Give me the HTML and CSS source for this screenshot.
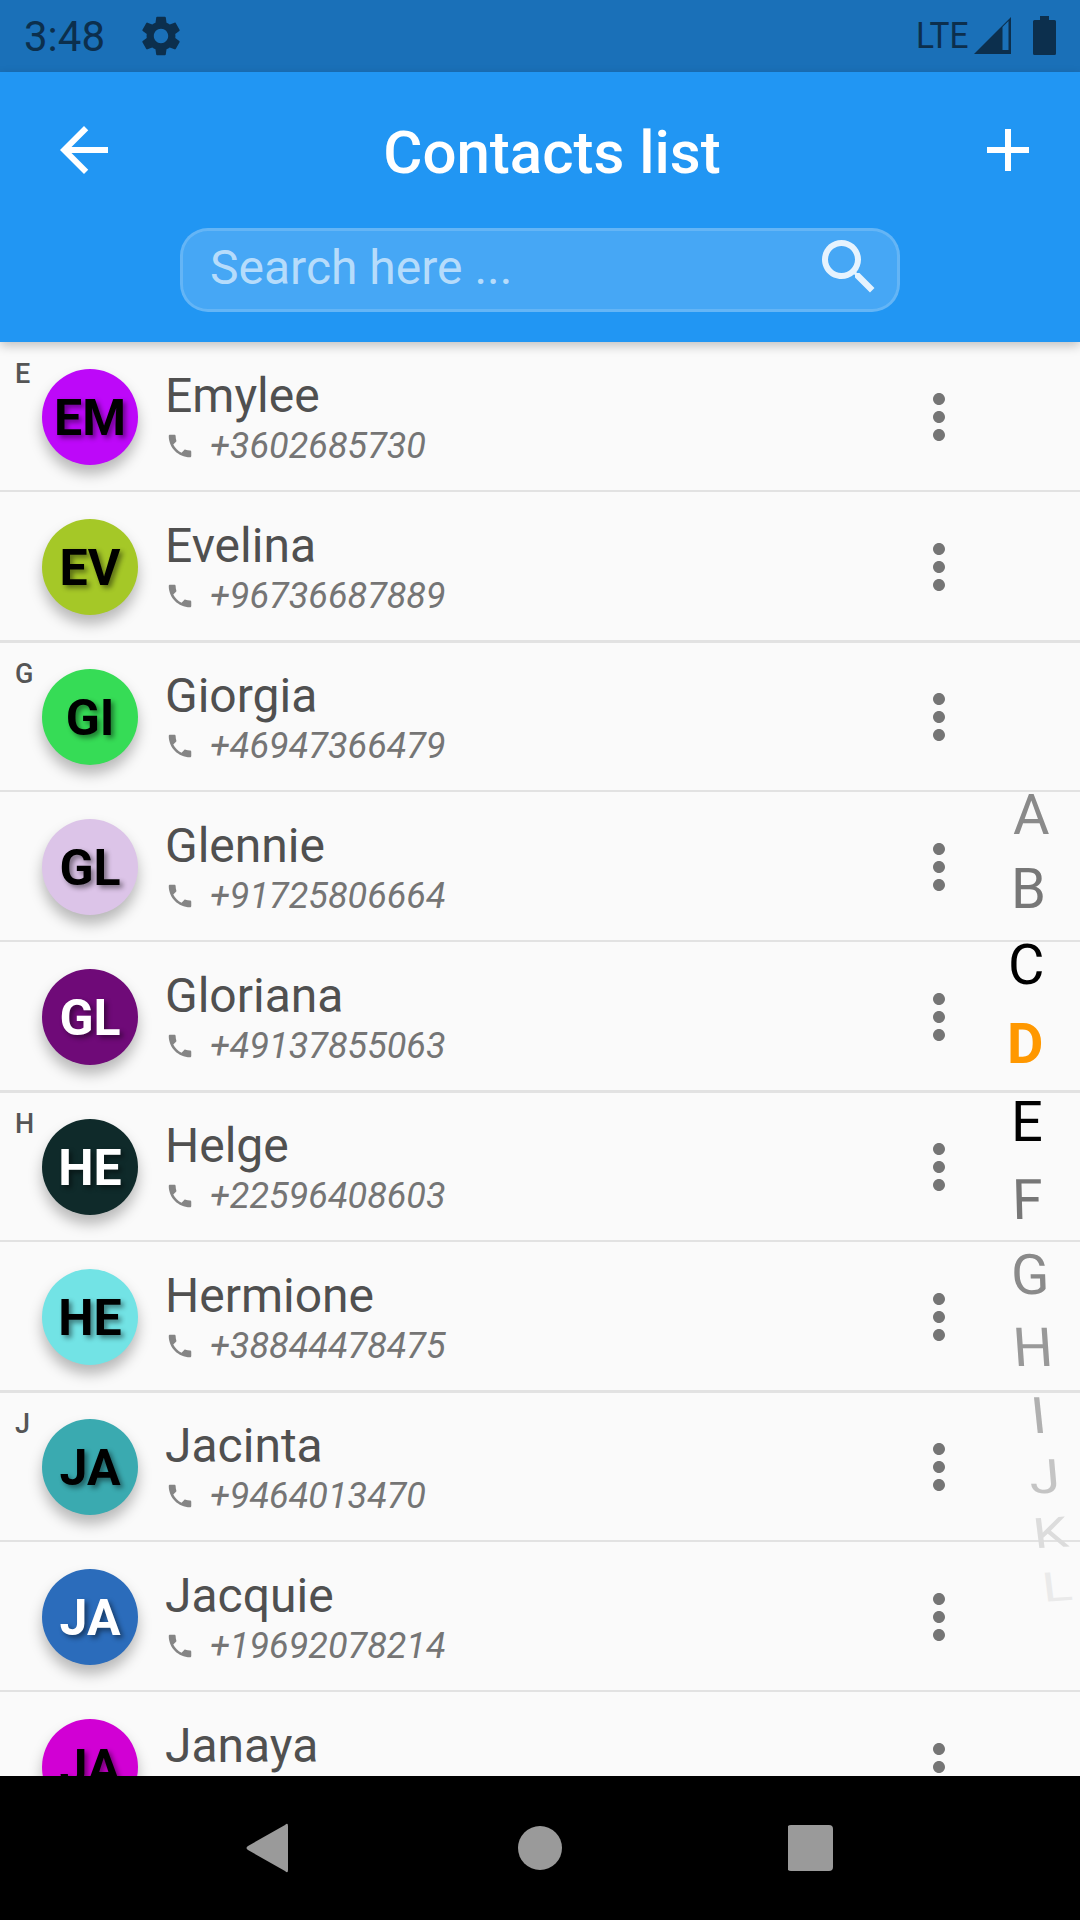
FILE: index.html
```html
<!DOCTYPE html>
<html lang="en">
<head>
<meta charset="utf-8">
<title>Contacts list</title>
<link rel="stylesheet" href="styles.css">
</head>
<body>
<div class="phone">
  <svg width="0" height="0" class="defs">
    <defs>
      <symbol id="i-phone" viewBox="0 0 24 24"><path d="M6.62 10.79c1.44 2.83 3.76 5.14 6.59 6.59l2.2-2.2c.27-.27.67-.36 1.02-.24 1.12.37 2.33.57 3.57.57.55 0 1 .45 1 1V20c0 .55-.45 1-1 1-9.39 0-17-7.61-17-17 0-.55.45-1 1-1h3.5c.55 0 1 .45 1 1 0 1.25.2 2.45.57 3.57.11.35.03.74-.25 1.02l-2.2 2.2z"/></symbol>
      <symbol id="i-more" viewBox="0 0 24 24"><path d="M12 8c1.1 0 2-.9 2-2s-.9-2-2-2-2 .9-2 2 .9 2 2 2zm0 2c-1.1 0-2 .9-2 2s.9 2 2 2 2-.9 2-2-.9-2-2-2zm0 6c-1.1 0-2 .9-2 2s.9 2 2 2 2-.9 2-2-.9-2-2-2z"/></symbol>
    </defs>
  </svg>

  <header class="status">
    <div class="status-left">
      <span class="time">3:48</span>
      <svg class="gear" viewBox="0 0 24 24"><path d="M19.14 12.94c.04-.3.06-.61.06-.94 0-.32-.02-.64-.07-.94l2.03-1.58c.18-.14.23-.41.12-.61l-1.92-3.32c-.12-.22-.37-.29-.59-.22l-2.39.96c-.5-.38-1.03-.7-1.62-.94l-.36-2.54c-.04-.24-.24-.41-.48-.41h-3.84c-.24 0-.43.17-.47.41l-.36 2.54c-.59.24-1.13.57-1.62.94l-2.39-.96c-.22-.08-.47 0-.59.22L2.74 8.87c-.12.21-.08.47.12.61l2.03 1.58c-.05.3-.09.63-.09.94s.02.64.07.94l-2.03 1.58c-.18.14-.23.41-.12.61l1.92 3.32c.12.22.37.29.59.22l2.39-.96c.5.38 1.03.7 1.62.94l.36 2.54c.05.24.24.41.48.41h3.84c.24 0 .44-.17.47-.41l.36-2.54c.59-.24 1.13-.56 1.62-.94l2.39.96c.22.08.47 0 .59-.22l1.92-3.32c.12-.22.07-.47-.12-.61l-2.01-1.58zM12 15.6c-1.98 0-3.6-1.62-3.6-3.6s1.62-3.6 3.6-3.6 3.6 1.62 3.6 3.6-1.62 3.6-3.6 3.6z"/></svg>
    </div>
    <div class="status-right">
      <span class="lte">LTE</span>
      <svg class="signal" viewBox="0 0 37 37"><path d="M0 37 26 11v26z"/><path fill-rule="evenodd" d="M26 11 37 0v37H26zM28.500 10V33H34.500V4z"/></svg>
      <svg class="battery" viewBox="0 0 23 39"><path d="M7 0h9v4h5.500q1.500 0 1.500 1.500v32q0 1.500-1.500 1.500h-20q-1.500 0-1.500-1.500v-32q0-1.500 1.500-1.500H7z"/></svg>
    </div>
  </header>

  <section class="appbar">
    <div class="appbar-top">
      <svg class="bar-icon" viewBox="0 0 24 24"><path d="M20 11H7.830l5.590-5.590L12 4l-8 8 8 8 1.410-1.410L7.830 13H20v-2z"/></svg>
      <h1 class="title">Contacts list</h1>
      <svg class="bar-icon" viewBox="0 0 24 24"><path d="M19 13h-6v6h-2v-6H5v-2h6V5h2v6h6v2z"/></svg>
    </div>
    <div class="search">
      <span class="search-text">Search here ...</span>
      <svg class="search-icon" viewBox="0 0 24 24"><path d="M15.500 14h-.79l-.28-.27C15.410 12.590 16 11.110 16 9.500 16 5.910 13.090 3 9.500 3S3 5.910 3 9.500 5.910 16 9.500 16c1.610 0 3.090-.59 4.230-1.570l.27.280v.79l5 4.990L20.490 19l-4.990-5zm-6 0C7.010 14 5 11.990 5 9.500S7.010 5 9.500 5 14 7.010 14 9.500 11.990 14 9.500 14z"/></svg>
    </div>
  </section>

  <main class="list">
    <article class="row">
      <span class="section-letter">E</span>
      <div class="avatar c-em">EM</div>
      <div class="info"><div class="name">Emylee</div><div class="tel"><svg class="tel-icon"><use href="#i-phone"/></svg><span class="num">+3602685730</span></div></div>
      <svg class="more"><use href="#i-more"/></svg>
    </article>
    <article class="row end">
      <div class="avatar c-ev">EV</div>
      <div class="info"><div class="name">Evelina</div><div class="tel"><svg class="tel-icon"><use href="#i-phone"/></svg><span class="num">+96736687889</span></div></div>
      <svg class="more"><use href="#i-more"/></svg>
    </article>
    <article class="row">
      <span class="section-letter">G</span>
      <div class="avatar c-gi">GI</div>
      <div class="info"><div class="name">Giorgia</div><div class="tel"><svg class="tel-icon"><use href="#i-phone"/></svg><span class="num">+46947366479</span></div></div>
      <svg class="more"><use href="#i-more"/></svg>
    </article>
    <article class="row">
      <div class="avatar c-gl1">GL</div>
      <div class="info"><div class="name">Glennie</div><div class="tel"><svg class="tel-icon"><use href="#i-phone"/></svg><span class="num">+91725806664</span></div></div>
      <svg class="more"><use href="#i-more"/></svg>
    </article>
    <article class="row end">
      <div class="avatar c-gl2 light">GL</div>
      <div class="info"><div class="name">Gloriana</div><div class="tel"><svg class="tel-icon"><use href="#i-phone"/></svg><span class="num">+49137855063</span></div></div>
      <svg class="more"><use href="#i-more"/></svg>
    </article>
    <article class="row">
      <span class="section-letter">H</span>
      <div class="avatar c-he1 light">HE</div>
      <div class="info"><div class="name">Helge</div><div class="tel"><svg class="tel-icon"><use href="#i-phone"/></svg><span class="num">+22596408603</span></div></div>
      <svg class="more"><use href="#i-more"/></svg>
    </article>
    <article class="row end">
      <div class="avatar c-he2">HE</div>
      <div class="info"><div class="name">Hermione</div><div class="tel"><svg class="tel-icon"><use href="#i-phone"/></svg><span class="num">+38844478475</span></div></div>
      <svg class="more"><use href="#i-more"/></svg>
    </article>
    <article class="row">
      <span class="section-letter">J</span>
      <div class="avatar c-ja1">JA</div>
      <div class="info"><div class="name">Jacinta</div><div class="tel"><svg class="tel-icon"><use href="#i-phone"/></svg><span class="num">+9464013470</span></div></div>
      <svg class="more"><use href="#i-more"/></svg>
    </article>
    <article class="row">
      <div class="avatar c-ja2 light">JA</div>
      <div class="info"><div class="name">Jacquie</div><div class="tel"><svg class="tel-icon"><use href="#i-phone"/></svg><span class="num">+19692078214</span></div></div>
      <svg class="more"><use href="#i-more"/></svg>
    </article>
    <article class="row">
      <div class="avatar c-ja3">JA</div>
      <div class="info"><div class="name">Janaya</div><div class="tel"></div></div>
      <svg class="more"><use href="#i-more"/></svg>
    </article>
  </main>

  <nav class="alpha">
    <span class="l l-a">A</span>
    <span class="l l-b">B</span>
    <span class="l l-c">C</span>
    <span class="l l-d">D</span>
    <span class="l l-e">E</span>
    <span class="l l-f">F</span>
    <span class="l l-g">G</span>
    <span class="l l-h">H</span>
    <span class="l l-i">I</span>
    <span class="l l-j">J</span>
    <span class="l l-k">K</span>
    <span class="l l-l">L</span>
  </nav>

  <footer class="navbar">
    <svg class="nav-icon" viewBox="0 0 46 50"><path d="M39 2q3-3 3 1v44q0 4-3 1L2 27q-3-2 0-4z"/></svg>
    <svg class="nav-icon" viewBox="0 0 46 50"><circle cx="23" cy="25" r="22"/></svg>
    <svg class="nav-icon" viewBox="0 0 46 50"><rect x="-1" y="2" width="46" height="46" rx="4"/></svg>
  </footer>
</div>
</body>
</html>
```
FILE: styles.css
```css
* { box-sizing: border-box; }
html, body { margin: 0; padding: 0; }
body { font-family: Roboto, "Liberation Sans", sans-serif; background: #fafafa; }

.defs { position: absolute; }

.phone {
  position: relative;
  width: 1080px;
  height: 1920px;
  display: flex;
  flex-direction: column;
  overflow: hidden;
  background: #fafafa;
}

/* Status bar */
.status {
  height: 72px;
  flex: none;
  background: #1a70b8;
  color: #0c2f4d;
  display: flex;
  align-items: center;
  justify-content: space-between;
  padding: 0 24px 0 24px;
}
.status-left, .status-right { display: flex; align-items: center; }
.time { font-size: 42px; line-height: 72px; margin-top: 2px; }
.gear { width: 48px; height: 48px; margin-left: 32px; fill: #0c2f4d; }
.lte { font-size: 36px; line-height: 72px; display: inline-block; transform: scaleX(.93); transform-origin: right center; margin-right: 6px; }
.signal { width: 37px; height: 37px; fill: #0c2f4d; margin-right: 22px; margin-top: -1px; }
.battery { width: 23px; height: 39px; fill: #0c2f4d; margin-top: -1px; }

/* App bar */
.appbar {
  position: relative;
  z-index: 2;
  height: 270px;
  flex: none;
  background: #2196f3;
  box-shadow: 0 4px 10px rgba(0,0,0,.22);
  display: flex;
  flex-direction: column;
}
.appbar-top {
  height: 156px;
  padding: 0 36px 0 48px;
  display: flex;
  align-items: center;
  justify-content: space-between;
  flex: none;
}
.bar-icon { width: 72px; height: 72px; fill: #fff; flex: none; }
.title {
  margin: 6px 0 0 12px;
  font-size: 60px;
  font-weight: 500;
  color: #fff;
  line-height: 72px;
}
.search {
  width: 720px;
  height: 84px;
  margin-left: 180px;
  border: 3px solid rgba(255,255,255,.3);
  border-radius: 28px;
  background: rgba(255,255,255,.17);
  background-clip: padding-box;
  display: flex;
  align-items: center;
  justify-content: space-between;
  padding: 0 12px 0 27px;
}
.search-text { font-size: 48px; color: #b6dcfb; line-height: 72px; margin-top: -4px; }
.search-icon { width: 72px; height: 72px; fill: #e6f3fe; margin-top: -6px; }

/* List */
.list { flex: 1; overflow: hidden; min-height: 0; }
.row {
  position: relative;
  height: 150px;
  display: flex;
  align-items: center;
  padding: 2px 105px 0 42px;
  border-bottom: 2px solid #e2e2e2;
}
.row.end { height: 151px; margin-bottom: -1px; border-bottom: 3px solid #e2e2e2; }
.section-letter {
  position: absolute;
  left: 15px;
  top: 15px;
  font-size: 27px;
  font-weight: 500;
  line-height: 34px;
  color: #555;
}
.avatar {
  width: 96px;
  height: 96px;
  flex: none;
  border-radius: 50%;
  display: flex;
  align-items: center;
  justify-content: center;
  padding-top: 1px;
  font-size: 50px;
  font-weight: 700;
  color: #000;
  text-shadow: 3px 3px 5px rgba(0,0,0,.45);
  box-shadow: 0 9px 14px rgba(0,0,0,.27);
}
.avatar.light { color: #fff; }
.c-em { background: #bd08f9; }
.c-ev { background: #a5c827; }
.c-gi { background: #36dc56; }
.c-gl1 { background: #dcc4e8; }
.c-gl2 { background: #6f0a78; }
.c-he1 { background: #0f2a2a; }
.c-he2 { background: #72e3e5; }
.c-ja1 { background: #3aaab0; }
.c-ja2 { background: #2b6cbb; }
.c-ja3 { background: #d100d4; }

.info { margin: 2px 0 0 27px; flex: 1; min-width: 0; }
.name { font-size: 48px; line-height: 52px; color: #505050; }
.tel { display: flex; align-items: center; height: 42px; margin-top: 3px; }
.tel-icon { width: 30px; height: 30px; fill: #858585; flex: none; }
.num { font-size: 36px; font-style: italic; color: #757575; margin-left: 15px; line-height: 42px; }
.more { width: 72px; height: 72px; fill: #757575; flex: none; }

/* Alphabet wheel */
.alpha {
  position: absolute;
  inset: 0;
  z-index: 1;
  pointer-events: none;
}
.l { position: absolute; font-size: 56px; line-height: 1; color: #757575; }
.l-a { left: 1013px; top: 787px; color: #8a8a8a; }
.l-b { left: 1011px; top: 861px; color: #777; }
.l-c { left: 1008px; top: 937px; color: #000; }
.l-d { left: 1007px; top: 1016px; color: #ff9800; font-weight: 700; }
.l-e { left: 1011px; top: 1094px; color: #000; }
.l-f { left: 1012px; top: 1172px; color: #777; transform: skewX(1.5deg); }
.l-g { left: 1011px; top: 1247px; color: #8a8a8a; transform: skewX(2deg); }
.l-h { left: 1013px; top: 1320px; color: #999; transform: skewX(4deg) scaleY(.96); }
.l-i { left: 1031px; top: 1388px; color: #b0b0b0; transform: skewX(6deg) scaleY(.9); }
.l-j { left: 1029px; top: 1449px; color: #c4c4c4; transform: skewX(5deg) scaleY(.85); }
.l-k { left: 1033px; top: 1505px; color: #dcdcdc; transform: skewX(7deg) skewY(-3deg) scaleY(.75); }
.l-l { left: 1042px; top: 1559px; color: #eaeaea; transform: skewX(7deg) skewY(-4deg) scaleY(.72); }

/* Navigation bar */
.navbar {
  position: relative;
  z-index: 3;
  height: 144px;
  flex: none;
  background: #000;
  display: flex;
  align-items: center;
  justify-content: center;
  gap: 225px;
}
.nav-icon { width: 46px; height: 50px; fill: #9a9a9a; }
```
